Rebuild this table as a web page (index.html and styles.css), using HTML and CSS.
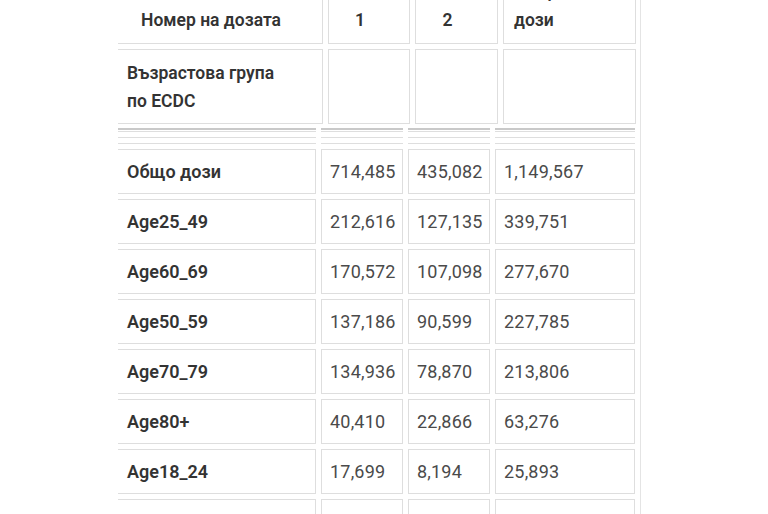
FILE: index.html
```html
<!DOCTYPE html>
<html lang="bg">
<head>
<meta charset="utf-8">
<title>Дози по възрастова група</title>
<link rel="stylesheet" href="styles.css">
</head>
<body>
<div class="frame">
  <div class="grid head">
    <div class="cell hc center">Номер на дозата</div>
    <div class="cell hc center">1</div>
    <div class="cell hc center">2</div>
    <div class="cell hc">Общо<br>дози</div>

    <div class="cell label tall">Възрастова група<br>по ECDC</div>
    <div class="cell tall"></div>
    <div class="cell tall"></div>
    <div class="cell tall"></div>
  </div>

  <div class="grid body">
    <div class="cell rule1"></div><div class="cell rule1"></div><div class="cell rule1"></div><div class="cell rule1"></div>
    <div class="cell rule2"></div><div class="cell rule2"></div><div class="cell rule2"></div><div class="cell rule2"></div>

    <div class="cell label row">Общо дози</div><div class="cell num row">714,485</div><div class="cell num row">435,082</div><div class="cell num row">1,149,567</div>
    <div class="cell label row">Age25_49</div><div class="cell num row">212,616</div><div class="cell num row">127,135</div><div class="cell num row">339,751</div>
    <div class="cell label row">Age60_69</div><div class="cell num row">170,572</div><div class="cell num row">107,098</div><div class="cell num row">277,670</div>
    <div class="cell label row">Age50_59</div><div class="cell num row">137,186</div><div class="cell num row">90,599</div><div class="cell num row">227,785</div>
    <div class="cell label row">Age70_79</div><div class="cell num row">134,936</div><div class="cell num row">78,870</div><div class="cell num row">213,806</div>
    <div class="cell label row">Age80+</div><div class="cell num row">40,410</div><div class="cell num row">22,866</div><div class="cell num row">63,276</div>
    <div class="cell label row">Age18_24</div><div class="cell num row">17,699</div><div class="cell num row">8,194</div><div class="cell num row">25,893</div>
    <div class="cell row"></div><div class="cell row"></div><div class="cell row"></div><div class="cell row"></div>
  </div>
</div>
</body>
</html>
```

FILE: styles.css
```css
html, body {
  margin: 0;
  padding: 0;
  background: #ffffff;
  height: 514px;
  overflow: hidden;
}

body {
  font-family: Roboto, "Liberation Sans", sans-serif;
  font-size: 18px;
  color: #333333;
}

.frame {
  margin-top: -26px;
  margin-left: 118px;
  width: 522px;
  border-right: 1px solid #e4e4e4;
  overflow: hidden;
  padding-bottom: 40px;
}

.grid {
  display: grid;
  gap: 5px;
  margin-left: -1px;
}

.head {
  grid-template-columns: 206px 82px 83px 133px;
}

.body {
  grid-template-columns: 199px 82px 82px 140px;
  margin-top: 4px;
}

.cell {
  border: 1px solid #dedede;
  box-sizing: border-box;
  line-height: 28px;
}

.hc {
  height: 70px;
  display: flex;
  align-items: flex-end;
  padding: 0 0 9px 10px;
  font-weight: 600;
  color: #333333;
  font-size: 17.5px;
}

.hc.center {
  justify-content: center;
  padding-left: 0;
  padding-right: 18px;
}

.tall {
  height: 75px;
  padding: 9px 0 0 9px;
  font-size: 17.5px;
}

.label {
  font-weight: 600;
  color: #333333;
}

.rule1 {
  height: 4px;
  border-top: 2px solid #c9c9c9;
  border-left: none;
  border-right: none;
}

.rule2 {
  height: 7px;
  border-left: none;
  border-right: none;
}

.row {
  height: 45px;
  display: flex;
  align-items: center;
  padding-left: 9px;
}

.num {
  font-weight: 400;
  color: #4a4a4a;
  padding-left: 8px;
  letter-spacing: 0.2px;
}
```
